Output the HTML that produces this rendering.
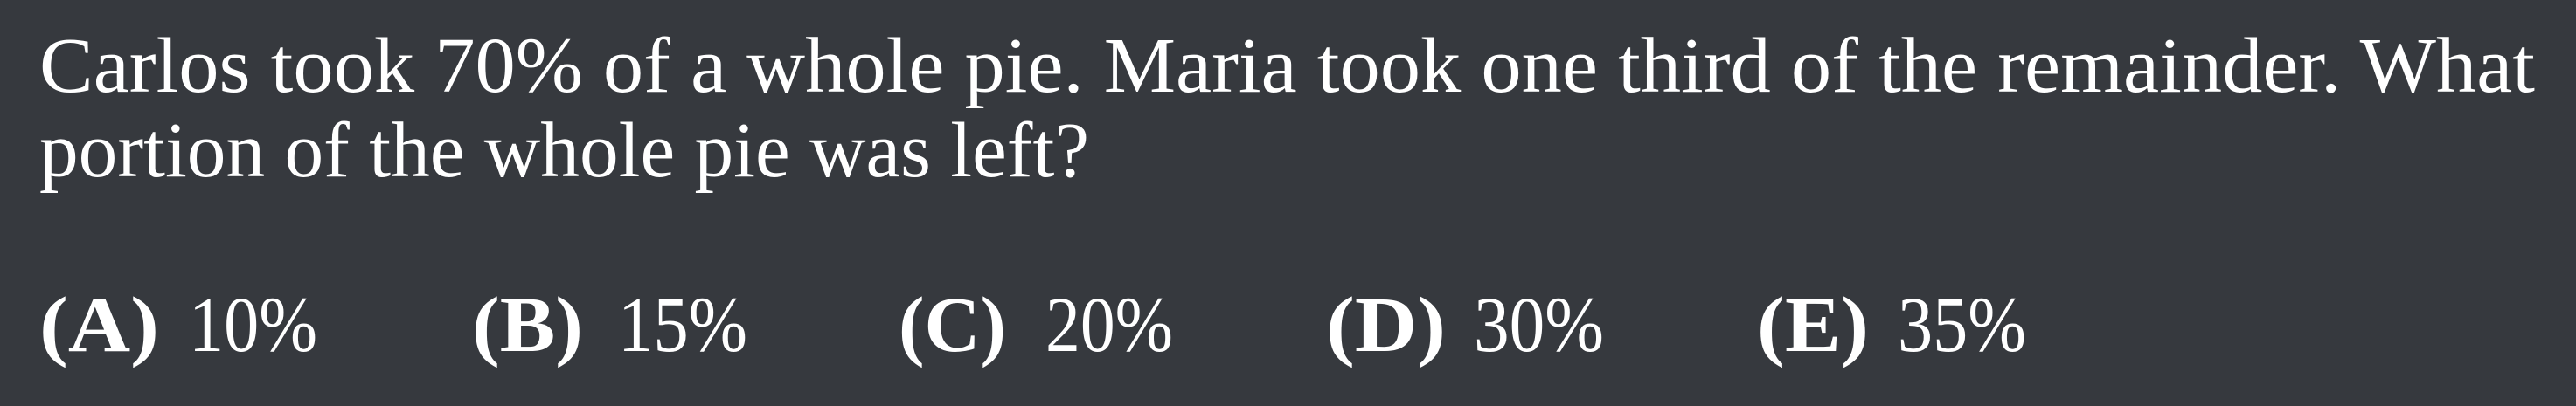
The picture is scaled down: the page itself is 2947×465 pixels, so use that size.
<!DOCTYPE html>
<html><head><meta charset="utf-8"><style>
html,body{margin:0;padding:0;background:#36393e;width:2947px;height:465px;overflow:hidden}
svg{display:block}
text{font-family:"Liberation Serif",serif;fill:#ffffff;font-size:90px}
.b{font-weight:bold}
</style></head><body>
<svg width="2947" height="465" viewBox="0 0 2947 465">
<rect width="2947" height="465" fill="#36393e"/>
<text x="45" y="105" textLength="2855" lengthAdjust="spacingAndGlyphs">Carlos took 70% of a whole pie. Maria took one third of the remainder. What</text>
<text x="45" y="202" textLength="1201" lengthAdjust="spacingAndGlyphs">portion of the whole pie was left?</text>
<text class="b" x="45" y="402" textLength="137" lengthAdjust="spacingAndGlyphs">(A)</text>
<text x="216" y="402" textLength="147" lengthAdjust="spacingAndGlyphs">10%</text>
<text class="b" x="540" y="402" textLength="127" lengthAdjust="spacingAndGlyphs">(B)</text>
<text x="707" y="402" textLength="148" lengthAdjust="spacingAndGlyphs">15%</text>
<text class="b" x="1028" y="402" textLength="123" lengthAdjust="spacingAndGlyphs">(C)</text>
<text x="1196" y="402" textLength="146" lengthAdjust="spacingAndGlyphs">20%</text>
<text class="b" x="1517" y="402" textLength="137" lengthAdjust="spacingAndGlyphs">(D)</text>
<text x="1686" y="402" textLength="149" lengthAdjust="spacingAndGlyphs">30%</text>
<text class="b" x="2010" y="402" textLength="128" lengthAdjust="spacingAndGlyphs">(E)</text>
<text x="2171" y="402" textLength="147" lengthAdjust="spacingAndGlyphs">35%</text>
</svg>
</body></html>
